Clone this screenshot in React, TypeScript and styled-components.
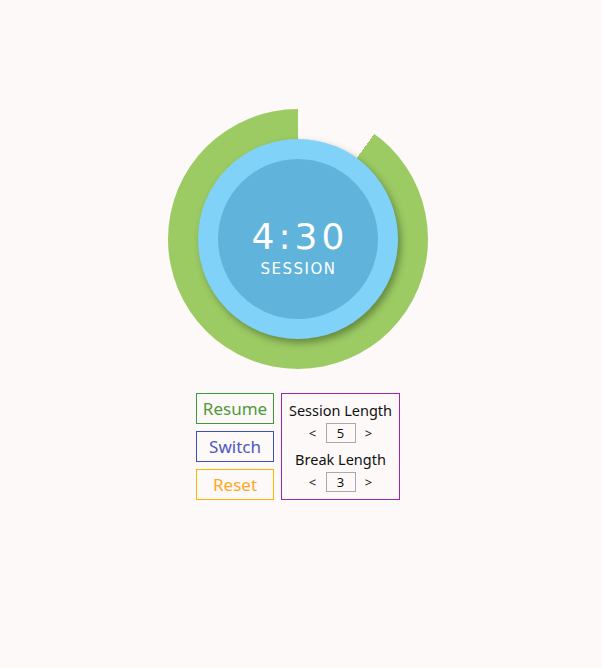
import React, { useState } from "react";
import styled, { createGlobalStyle } from "styled-components";

const GlobalStyle = createGlobalStyle`
  *, *::before, *::after {
    box-sizing: border-box;
  }
  body {
    margin: 0;
    background: #fdf9f8;
    font-family: "Noto Sans", "DejaVu Sans", sans-serif;
  }
`;

const Page = styled.div`
  display: flex;
  flex-direction: column;
  align-items: center;
  padding: 109px 6px 0 0;
  gap: 24px;
`;

const Ring = styled.div<{ $remaining: number }>`
  width: 260px;
  height: 260px;
  border-radius: 50%;
  background: ${(p) =>
    `conic-gradient(transparent 0deg ${p.$remaining * 360}deg, #9ccb64 ${p.$remaining * 360}deg 360deg)`};
  display: flex;
  align-items: center;
  justify-content: center;
`;

const Outer = styled.div`
  width: 200px;
  height: 200px;
  border-radius: 50%;
  background: #80d2f9;
  box-shadow: 3px 4px 7px rgba(40, 60, 20, 0.45);
  display: flex;
  align-items: center;
  justify-content: center;
`;

const Face = styled.div`
  width: 160px;
  height: 160px;
  border-radius: 50%;
  background: #60b4dc;
  display: flex;
  flex-direction: column;
  align-items: center;
  justify-content: center;
  padding-top: 18px;
  color: #fff;
`;

const Time = styled.div`
  font-family: "DejaVu Sans", sans-serif;
  font-size: 36px;
  letter-spacing: 4px;
  line-height: 36px;
  padding-left: 4px;
`;

const Label = styled.div`
  font-family: "DejaVu Sans", sans-serif;
  font-size: 15px;
  letter-spacing: 1.5px;
  line-height: 16px;
  margin-top: 6px;
  padding-left: 1px;
`;

const Controls = styled.div`
  display: flex;
  gap: 7px;
`;

const Buttons = styled.div`
  display: flex;
  flex-direction: column;
  gap: 7px;
`;

const Btn = styled.button<{ $color: string; $text: string }>`
  width: 78px;
  height: 31px;
  background: transparent;
  border: 1px solid ${(p) => p.$color};
  color: ${(p) => p.$text};
  font-family: "Noto Sans", sans-serif;
  font-size: 17px;
  padding: 0;
  cursor: pointer;
`;

const Panel = styled.div`
  width: 119px;
  height: 107px;
  border: 1px solid #9c27b0;
  display: flex;
  flex-direction: column;
  align-items: center;
  padding-top: 6px;
  color: #111;
  font-size: 14.5px;
`;

const Title = styled.div`
  line-height: 20px;
  height: 21px;
`;

const Stepper = styled.div`
  display: flex;
  align-items: flex-start;
  gap: 8px;
  height: 28px;
  padding-top: 2px;
  font-size: 13px;
`;

const Arrow = styled.span`
  cursor: pointer;
  width: 10px;
  line-height: 20px;
  text-align: center;
`;

const Value = styled.div`
  width: 30px;
  height: 20px;
  border: 1px solid #aaa;
  text-align: center;
  line-height: 18px;
  font-size: 13px;
`;

export default function App() {
  const [session, setSession] = useState(5);
  const [brk, setBrk] = useState(3);
  const remaining = 30 / (5 * 60);

  return (
    <>
      <GlobalStyle />
      <Page>
        <Ring $remaining={remaining}>
          <Outer>
            <Face>
              <Time>4:30</Time>
              <Label>SESSION</Label>
            </Face>
          </Outer>
        </Ring>
        <Controls>
          <Buttons>
            <Btn $color="#3d9a3d" $text="#4f9a3a">Resume</Btn>
            <Btn $color="#3f51b5" $text="#4a58c0">Switch</Btn>
            <Btn $color="#ffb300" $text="#ffa726">Reset</Btn>
          </Buttons>
          <Panel>
            <Title>Session Length</Title>
            <Stepper>
              <Arrow onClick={() => setSession(Math.max(1, session - 1))}>&lt;</Arrow>
              <Value>{session}</Value>
              <Arrow onClick={() => setSession(session + 1)}>&gt;</Arrow>
            </Stepper>
            <Title>Break Length</Title>
            <Stepper>
              <Arrow onClick={() => setBrk(Math.max(1, brk - 1))}>&lt;</Arrow>
              <Value>{brk}</Value>
              <Arrow onClick={() => setBrk(brk + 1)}>&gt;</Arrow>
            </Stepper>
          </Panel>
        </Controls>
      </Page>
    </>
  );
}
